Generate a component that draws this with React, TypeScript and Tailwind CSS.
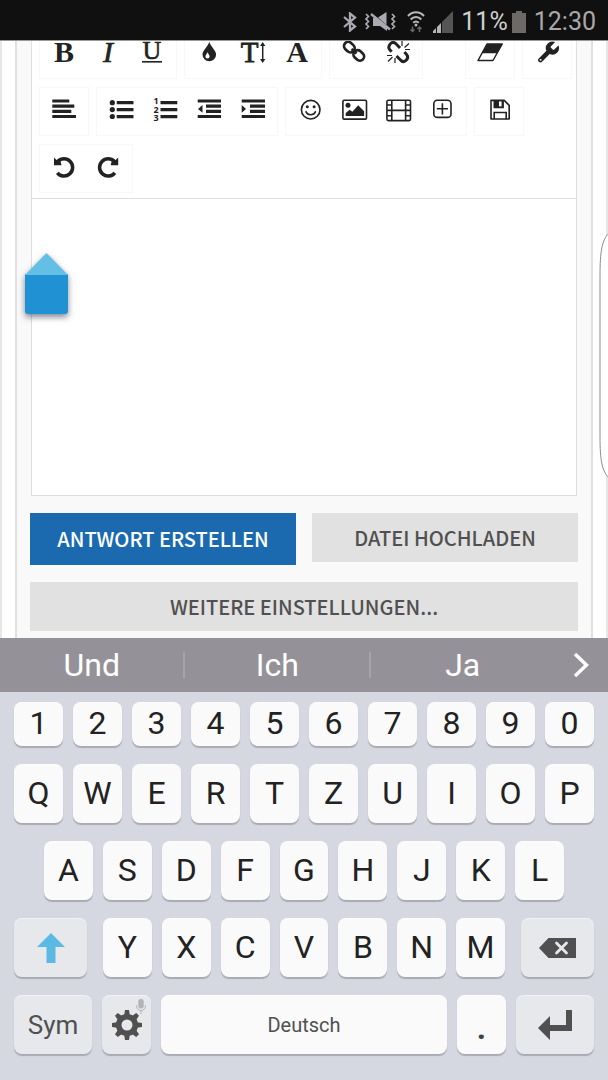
import type { ReactNode } from "react";

function Icon({ children }: { children: ReactNode }) {
  return (
    <svg className="h-[29px] w-7" viewBox="0 0 28 29" fill="currentColor" aria-hidden="true">
      {children}
    </svg>
  );
}

function Tool({ label, children }: { label: string; children: ReactNode }) {
  return (
    <button type="button" aria-label={label} className="flex h-[43px] w-11 items-center justify-center">
      <Icon>{children}</Icon>
    </button>
  );
}

function Group({ children, className = "" }: { children: ReactNode; className?: string }) {
  return <div className={`flex border border-[#f8f8f8] p-[2px] ${className}`}>{children}</div>;
}

function Letter({ x, size, bold, italic, baseline = 22, children }: { x: number; size: number; bold?: boolean; italic?: boolean; baseline?: number; children: string }) {
  return (
    <text
      x={x}
      y={baseline}
      textAnchor="middle"
      fontFamily="'Liberation Serif', serif"
      fontSize={size}
      fontWeight={bold ? 700 : 400}
      fontStyle={italic ? "italic" : "normal"}
    >
      {children}
    </text>
  );
}

function Toolbar() {
  return (
    <div role="toolbar" aria-label="Formatierung" className="flex flex-wrap gap-x-[7px] gap-y-2 border-b border-[#dedede] pb-[5px] pl-[7px] text-[#222]">
      <Group>
        <Tool label="Fett"><Letter x={14} size={30} bold>B</Letter></Tool>
        <Tool label="Kursiv"><g stroke="currentColor" strokeWidth="0.7"><Letter x={14} size={30} italic>I</Letter></g></Tool>
        <Tool label="Unterstrichen">
          <g stroke="currentColor" strokeWidth="0.6"><Letter x={14} size={26} baseline={19}>U</Letter></g>
          <rect x="4" y="21" width="20" height="1.6" />
        </Tool>
      </Group>
      <Group>
        <Tool label="Farbe">
          <path d="M14.3 1.7C13 6.5 7.5 10.5 7.5 14.6a6.8 6.6 0 0 0 13.6 0C21.1 10.5 15.6 6.5 14.3 1.7Z" />
          <path d="M12.6 12.2c-.8 1.6-2.2 2.7-2.2 4.2a2.1 2.1 0 0 0 4.2 0c0-1.5-1.5-2.6-2-4.2Z" fill="#fff" />
        </Tool>
        <Tool label="Schriftgröße">
          <g stroke="currentColor" strokeWidth="0.8"><Letter x={10.5} size={29}>T</Letter></g>
          <path d="M23.7 4v17" stroke="currentColor" strokeWidth="1.5" />
          <path d="m23.7 2 2.7 4h-5.4ZM23.7 23l2.7-4h-5.4Z" />
        </Tool>
        <Tool label="Schriftart"><Letter x={14} size={30} bold>A</Letter></Tool>
      </Group>
      <Group>
        <Tool label="Link">
          <g fill="none" stroke="currentColor" strokeWidth="2.7">
            <rect x="3.6" y="2.9" width="11.5" height="8.4" rx="4.2" transform="rotate(43 9.3 7.1)" />
            <rect x="13" y="11.3" width="11.5" height="8.4" rx="4.2" transform="rotate(43 18.8 15.5)" />
            <path d="m11.5 9 5 4.5" />
          </g>
        </Tool>
        <Tool label="Link entfernen">
          <g fill="none" stroke="currentColor" strokeWidth="3">
            <path d="M7.6 11.7 5.8 9.7C3 6.5 7.5 0 11.5 3.3L16 8" />
            <path d="m12.5 16 4.5 4.5c4 3.3 8.5-2.5 5.7-5.9L20.5 12" />
          </g>
          <path d="M18 6V1M20.5 7.500 25 3.500M21 9.500h5M3 15.500h5M4 21.500 8.500 17M11 18v5" fill="none" stroke="currentColor" strokeWidth="1.2" />
        </Tool>
      </Group>
      <Group className="ml-[35px]">
        <Tool label="Formatierung entfernen">
          <path d="M11 4h15.200L17 20.500H2Z" fill="none" stroke="currentColor" strokeWidth="1.500" strokeLinejoin="round" />
          <path d="M11 4h15.500l-5.200 9.300H5.700Z" />
        </Tool>
      </Group>
      <Group>
        <Tool label="Quelltext">
          <g transform="translate(1.8 -.7) scale(1.1)">
            <path d="M14.7 6.300a1 1 0 0 0 0 1.400l1.600 1.600a1 1 0 0 0 1.400 0l3.770-3.770a6 6 0 0 1-7.940 7.940l-6.910 6.910a2.120 2.120 0 0 1-3-3l6.910-6.910a6 6 0 0 1 7.940-7.940l-3.760 3.760z" />
            <circle cx="5.300" cy="18.700" r="0.900" fill="#fff" />
          </g>
        </Tool>
      </Group>

      <Group>
        <Tool label="Ausrichtung">
          <path d="M2.300 2.400h17v3.100h-17zM2.300 7.600h22v3.100h-22zM2.300 12.800h19v3.100h-19zM2.300 17.900h23.700V21H2.300z" />
        </Tool>
      </Group>
      <Group>
        <Tool label="Aufzählung">
          <circle cx="5.300" cy="5.700" r="2.600" />
          <circle cx="5.300" cy="12.600" r="2.600" />
          <circle cx="5.300" cy="19.500" r="2.600" />
          <path d="M9.700 4h16.800v3.300H9.700zM9.700 11h16.800v3.300H9.700zM9.700 17.900h16.800v3.300H9.700z" />
        </Tool>
        <Tool label="Nummerierung">
          <g fontFamily="'Noto Sans', sans-serif" fontSize="9" fontWeight="700">
            <text x="2.500" y="7.300">1</text>
            <text x="2.500" y="15.500">2</text>
            <text x="2.500" y="23.900">3</text>
          </g>
          <path d="M9.500 4h16.800v3.300H9.500zM9.500 11h16.800v3.300H9.500zM9.500 17.900h16.800v3.300H9.500z" />
        </Tool>
        <Tool label="Einzug verkleinern">
          <path d="M2.700 2.400H26v3.100H2.700zM11 7.600h15v3.100H11zM11 12.800h15v3.100H11zM2.700 17.900H26V21H2.700zM3 11.900 7.500 8v7.800z" />
        </Tool>
        <Tool label="Einzug vergrößern">
          <path d="M2.700 2.400H26v3.100H2.700zM11 7.600h15v3.100H11zM11 12.800h15v3.100H11zM2.700 17.900H26V21H2.700zM7 11.900 2.700 8v7.800z" />
        </Tool>
      </Group>
      <Group>
        <Tool label="Smiley">
          <circle cx="14.700" cy="12.700" r="9.300" fill="none" stroke="currentColor" strokeWidth="1.600" />
          <circle cx="11.300" cy="9.800" r="1.500" />
          <circle cx="18.100" cy="9.800" r="1.500" />
          <path d="M10 14.700c1.500 4 7.900 4 9.400 0" fill="none" stroke="currentColor" strokeWidth="1.600" strokeLinecap="round" />
        </Tool>
        <Tool label="Bild">
          <rect x="2.900" y="3.300" width="23.600" height="18.800" rx="1.200" fill="none" stroke="currentColor" strokeWidth="1.600" />
          <circle cx="8" cy="8.300" r="2.500" />
          <path d="M5.700 19v-3l4-3.200 2.600 1.900 5.900-6.500 5.900 6.100V19Z" />
        </Tool>
        <Tool label="Video">
          <g fill="none" stroke="currentColor" strokeWidth="1.600">
            <rect x="2.900" y="3.300" width="23.600" height="20.300" rx="1.500" />
            <path d="M7.800 3v21M21.600 3v21M3 13.400h23.500M3 8h4.800M3 18.800h4.800M21.600 8h4.900M21.600 18.800h4.900" />
          </g>
        </Tool>
        <Tool label="Einfügen">
          <g fill="none" stroke="currentColor" strokeWidth="1.600">
            <rect x="5.800" y="3.200" width="17.200" height="17.200" rx="3.500" />
            <path d="M14.400 6.200v11.200M8.800 11.800H20" />
          </g>
        </Tool>
      </Group>
      <Group>
        <Tool label="Entwurf speichern">
          <g fill="none" stroke="currentColor" strokeWidth="1.600">
            <path d="M6 3.400h13.200l5 5V22H6Z" strokeLinejoin="round" />
            <path d="M9.200 22v-6.500h12V22M18 3.500v7H9" />
          </g>
          <path fillRule="evenodd" d="M8.500 3.400h10v7.500h-10zM14 4.200v5.200h2.600V4.200z" />
        </Tool>
      </Group>

      <Group>
        <Tool label="Rückgängig">
          <path d="M7.800 7.500A8.600 8.600 0 1 1 7.300 18.800" fill="none" stroke="currentColor" strokeWidth="3.500" />
          <path d="M4 3.500 6.500 6l3.500-1 1.500 6.300H4Z" />
        </Tool>
        <Tool label="Wiederholen">
          <path d="M20.400 7.500a8.600 8.600 0 1 0 .5 11.300" fill="none" stroke="currentColor" strokeWidth="3.500" />
          <path d="M24.200 3.500 21.700 6l-3.500-1-1.500 6.300h7.500Z" />
        </Tool>
      </Group>
    </div>
  );
}

function StatusBar() {
  return (
    <header className="flex h-10 items-center justify-end gap-2 bg-[#101010] px-3 pt-[3px] text-[25px] leading-none text-[#aaa8aa]">
      <svg className="h-5 w-[14px]" viewBox="0 0 14 20" fill="none" stroke="#aaaab0" strokeWidth="2.300" aria-label="Bluetooth">
        <path d="m1 5 11 9.500L7 18.500v-17l5 4L1 15" />
      </svg>
      <svg className="h-[22px] w-[34px]" viewBox="0 0 34 22" aria-label="Stumm">
        <path d="m1 3 2.500 2.500L1 8l2.500 2.500L1 13l2.500 2.500L1 18M27 3l2.500 2.500L27 8l2.500 2.500L27 13l2.500 2.500L27 18" fill="none" stroke="#aaaab0" strokeWidth="1.700" />
        <path d="M8 7h3l11 9.500V20l-7-5H8zM13 6.500 21.500 1v13z" fill="#aaaab0" />
        <path d="m6 3 19 15.500" stroke="#aaaab0" strokeWidth="2.400" />
      </svg>
      <svg className="h-[22px] w-[18px]" viewBox="0 0 18 22" fill="none" aria-label="WLAN">
        <path d="M1 5c4.500-5 11.500-5 16 0M3.700 8.500c3-3.300 7.600-3.300 10.600 0M6.200 11.800c1.700-1.600 3.900-1.600 5.600 0" stroke="#b8b8b8" strokeWidth="2.100" />
        <circle cx="9" cy="14" r="1.500" fill="#b8b8b8" />
        <path d="M5.500 15.500v5m-2-2 2 2 2-2M12.500 21v-5m-2 2 2-2 2 2" stroke="#666" strokeWidth="1.500" />
      </svg>
      <svg className="h-[22px] w-5" viewBox="0 0 20 22" aria-label="Mobilfunk">
        <path d="M0 22v-2l3-3v5zM4 22v-6l4-4v10z" fill="#b5b5b5" />
        <path d="M9 22V11L20 0v22z" fill="#555" />
      </svg>
      <div className="flex items-center gap-1">
        <span className="text-[#cfcfcf]">11%</span>
        <svg className="h-[22px] w-[14px]" viewBox="0 0 14 22" fill="#6d6967" aria-label="Akku">
          <path d="M4 0h6v2h4v20H0V2h4z" />
        </svg>
      </div>
      <time>12:30</time>
    </header>
  );
}

const light = "bg-[#fafafa] pb-[2px] text-[#222]";
const grey = "bg-[#e7e8ec] text-[#505050]";

function Key({ children, label, className }: { children: ReactNode; label?: string; className: string }) {
  return (
    <button
      type="button"
      aria-label={label}
      className={`relative flex min-w-0 items-center justify-center rounded-lg shadow-[0_2px_1px_#a9abb3,inset_0_1px_0_#ffffff80] ${className}`}
    >
      {children}
    </button>
  );
}

function Letters({ keys }: { keys: string }) {
  return (
    <>
      {keys.split("").map((k) => (
        <Key key={k} className={`flex-1 ${light}`}>{k}</Key>
      ))}
    </>
  );
}

function Keyboard() {
  return (
    <section aria-label="Tastatur" className="flex flex-1 flex-col gap-[18px] bg-[#d5d8e1] px-[14px] pt-[10px] pb-[26px] text-[32px] leading-none">
      <div className="flex h-11 gap-[10px]"><Letters keys="1234567890" /></div>
      <div className="flex h-[59px] gap-[10px]"><Letters keys="QWERTZUIOP" /></div>
      <div className="flex h-[59px] gap-[10px] px-[30px]"><Letters keys="ASDFGHJKL" /></div>
      <div className="flex h-[59px] gap-4">
        <Key label="Umschalt" className={`flex-[73] ${grey}`}>
          <svg className="h-[30px] w-7" viewBox="0 0 28 30" fill="#5bbae3" aria-hidden="true">
            <path d="M14 0 28 14h-9.500v16h-9V14H0Z" />
          </svg>
        </Key>
        <div className="flex flex-[402] gap-[10px]"><Letters keys="YXCVBNM" /></div>
        <Key label="Löschen" className={`flex-[73] ${grey}`}>
          <svg className="h-5 w-[37px]" viewBox="0 0 37 20" aria-hidden="true">
            <path d="M0 10 9.500 0H37v20H9.500Z" fill="#505050" />
            <path d="m17.500 5 10 10m0-10-10 10" stroke="#e7e8ec" strokeWidth="2.800" strokeLinecap="round" />
          </svg>
        </Key>
      </div>
      <div className="flex h-[59px] gap-[10px]">
        <Key className={`flex-[78] text-[26px] ${grey}`}>Sym</Key>
        <Key label="Einstellungen" className={`flex-[49] ${grey}`}>
          <svg className="h-[30px] w-[30px]" viewBox="-15 -15 30 30" fill="currentColor" aria-hidden="true">
            <circle r="8.300" fill="none" stroke="currentColor" strokeWidth="5.600" />
            {[0, 45, 90, 135].map((a) => (
              <path key={a} d="M-2-15h4l.8 5h-5.600zM-2 15h4l.8-5h-5.600z" transform={`rotate(${a})`} />
            ))}
          </svg>
          <svg className="absolute top-1 right-[5px] h-[15px] w-[10px]" viewBox="0 0 10 15" fill="#b2b3b8" aria-hidden="true">
            <rect x="2.300" y="0" width="5.400" height="9.500" rx="2.500" />
            <path d="M.6 6v1.500a4.400 4 0 0 0 8.800 0V6M5 11.500V15" fill="none" stroke="#b2b3b8" />
          </svg>
        </Key>
        <Key className="flex-[285] bg-[#fafafa] text-[20px] text-[#505050]">Deutsch</Key>
        <Key className="flex-[49] bg-[#fafafa] pt-[6px] font-bold text-[#404040]">.</Key>
        <Key label="Eingabe" className={`flex-[78] ${grey}`}>
          <svg className="h-[30px] w-[34px]" viewBox="0 0 34 30" fill="currentColor" aria-hidden="true">
            <path d="M28 0h6v21H12v9L0 18 12 6v9h16Z" />
          </svg>
        </Key>
      </div>
    </section>
  );
}

function Suggestions() {
  return (
    <nav aria-label="Vorschläge" className="flex h-[54px] items-center bg-[#949298] text-[32px] leading-none text-white">
      {["Und", "Ich", "Ja"].map((word, i) => (
        <button key={word} type="button" className={`h-[26px] flex-[185] leading-[26px] ${i < 2 ? "border-r-2 border-[#a6a4a8]" : ""}`}>
          {word}
        </button>
      ))}
      <button type="button" aria-label="Mehr" className="flex flex-[54] justify-center">
        <svg className="h-[26px] w-4" viewBox="0 0 16 26" fill="none" stroke="currentColor" strokeWidth="3.500" aria-hidden="true">
          <path d="m2 2 11.500 11L2 24" />
        </svg>
      </button>
    </nav>
  );
}

const action = "h-[49px] bg-[#e1e1e1] text-[#505050]";

export default function App() {
  return (
    <div className="flex min-h-screen flex-col bg-white font-['Roboto',sans-serif]">
      <StatusBar />
      <main className="relative overflow-hidden border-t border-[#999] bg-white">
        <div className="border-x-2 border-[#e6e6e6] px-[13px]">
          <form className="border-x-2 border-[#e0e0e0] bg-[#f9f9f9] px-[13px] pb-[7px]" onSubmit={(e) => e.preventDefault()}>
            <div className="mx-px -mt-[11px] border border-t-0 border-[#dedede] bg-white">
              <Toolbar />
              <textarea aria-label="Antwort" className="block h-[296px] w-full resize-none bg-white p-3 outline-none" />
            </div>
            <div className="mt-[17px] grid grid-cols-2 items-start gap-x-4 gap-y-[17px] font-['Noto_Sans_CJK_SC',sans-serif] text-[20px] leading-none font-medium">
              <button type="submit" className="h-[52px] bg-[#1b6ab0] text-white">ANTWORT ERSTELLEN</button>
              <button type="button" className={action}>DATEI HOCHLADEN</button>
              <button type="button" className={`col-span-2 ${action}`}>WEITERE EINSTELLUNGEN...</button>
            </div>
          </form>
        </div>
        <svg className="absolute top-[210px] left-[15px] h-[78px] w-[64px]" viewBox="0 0 64 78" aria-hidden="true">
          <g className="drop-shadow-[0_3px_3px_rgba(30,30,60,0.55)]">
            <path d="M10 23h43v37a3 3 0 0 1-3 3H13a3 3 0 0 1-3-3Z" fill="#2092d3" />
            <path d="M10 24 31.500 2 53 24Z" fill="#63bfe5" />
          </g>
        </svg>
        <svg className="absolute top-[190px] right-0 h-[250px] w-[9px]" viewBox="0 0 9 250" aria-hidden="true">
          <path d="M10 2C3 9 1 20 1 45v160c0 25 2 35 9 42" fill="#fff" stroke="#8d8d90" />
        </svg>
      </main>
      <Suggestions />
      <Keyboard />
    </div>
  );
}
